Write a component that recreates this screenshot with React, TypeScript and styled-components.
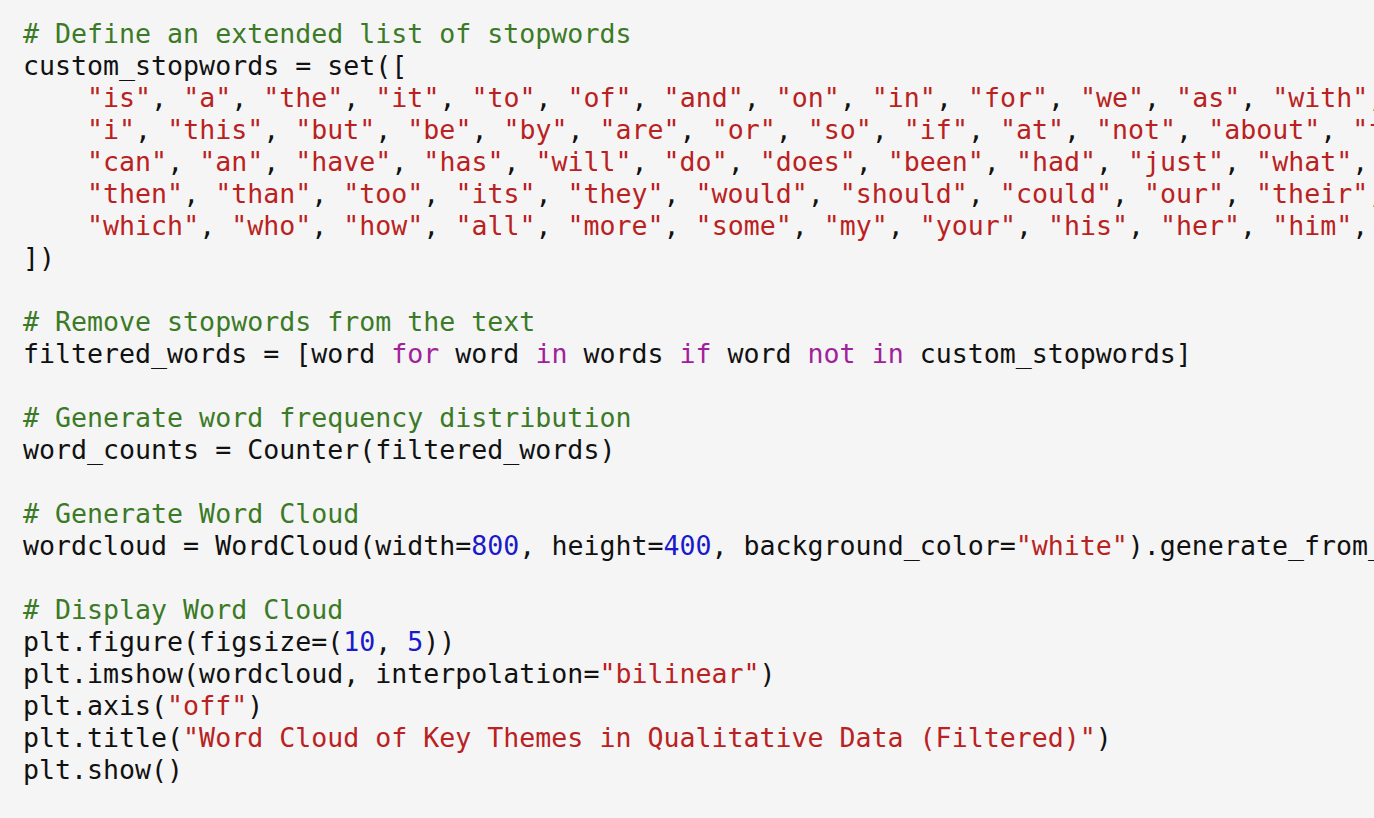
import React from "react";
import styled, { createGlobalStyle } from "styled-components";

const Global = createGlobalStyle`
  html, body { margin: 0; padding: 0; background: #f5f5f5; overflow: hidden; }
`;

const Editor = styled.pre`
  margin: 0;
  width: 1374px;
  height: 818px;
  box-sizing: border-box;
  padding: 18px 0 0 23px;
  background: #f5f5f5;
  color: #111;
  font-family: "DejaVu Sans Mono", "Liberation Mono", monospace;
  font-size: 26.6px;
  line-height: 32px;
  white-space: pre;
  overflow: hidden;
`;

const Line = styled.div`
  height: 32px;
`;

const Comment = styled.span`color: #3b7a26;`;
const Str = styled.span`color: #ba2121;`;
const Kw = styled.span`color: #a0229a;`;
const Num = styled.span`color: #1a1acc;`;

const strLine = (words: string[], tail: string) => (
  <Line>
    {"    "}
    {words.map((w, i) => (
      <React.Fragment key={i}>
        <Str>"{w}"</Str>
        {", "}
      </React.Fragment>
    ))}
    {tail}
  </Line>
);

export default function App() {
  return (
    <>
      <Global />
      <Editor>
        <Line><Comment># Define an extended list of stopwords</Comment></Line>
        <Line>custom_stopwords = set([</Line>
        {strLine(["is", "a", "the", "it", "to", "of", "and", "on", "in", "for", "we", "as", "with", "that"], "")}
        {strLine(["i", "this", "but", "be", "by", "are", "or", "so", "if", "at", "not", "about", "from", "was"], "")}
        {strLine(["can", "an", "have", "has", "will", "do", "does", "been", "had", "just", "what", "there"], "")}
        {strLine(["then", "than", "too", "its", "they", "would", "should", "could", "our", "their", "them"], "")}
        {strLine(["which", "who", "how", "all", "more", "some", "my", "your", "his", "her", "him", "she"], "")}
        <Line>])</Line>
        <Line> </Line>
        <Line><Comment># Remove stopwords from the text</Comment></Line>
        <Line>filtered_words = [word <Kw>for</Kw> word <Kw>in</Kw> words <Kw>if</Kw> word <Kw>not</Kw> <Kw>in</Kw> custom_stopwords]</Line>
        <Line> </Line>
        <Line><Comment># Generate word frequency distribution</Comment></Line>
        <Line>word_counts = Counter(filtered_words)</Line>
        <Line> </Line>
        <Line><Comment># Generate Word Cloud</Comment></Line>
        <Line>wordcloud = WordCloud(width=<Num>800</Num>, height=<Num>400</Num>, background_color=<Str>"white"</Str>).generate_from_frequencies(word_counts)</Line>
        <Line> </Line>
        <Line><Comment># Display Word Cloud</Comment></Line>
        <Line>plt.figure(figsize=(<Num>10</Num>, <Num>5</Num>))</Line>
        <Line>plt.imshow(wordcloud, interpolation=<Str>"bilinear"</Str>)</Line>
        <Line>plt.axis(<Str>"off"</Str>)</Line>
        <Line>plt.title(<Str>"Word Cloud of Key Themes in Qualitative Data (Filtered)"</Str>)</Line>
        <Line>plt.show()</Line>
      </Editor>
    </>
  );
}
